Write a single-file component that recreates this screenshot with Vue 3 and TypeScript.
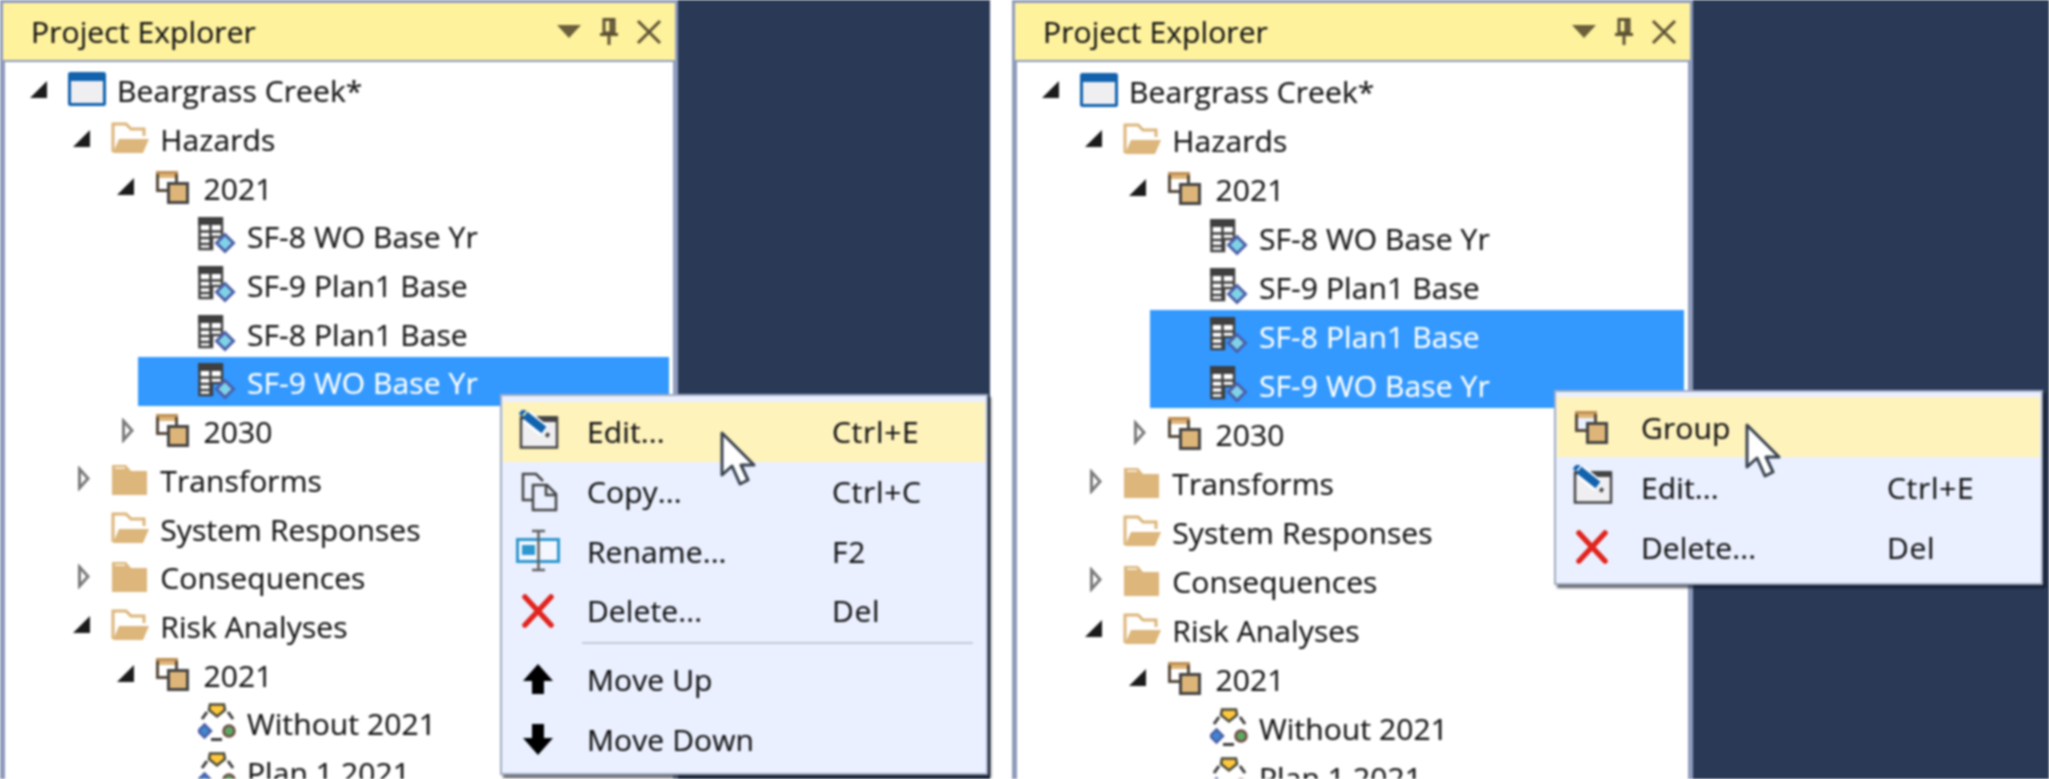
<script setup lang="ts">
type Arrow = 'open' | 'closed' | 'none'
interface TreeRow {
  label: string
  level: number
  arrow: Arrow
  icon: string
  selected?: boolean
}
interface MenuItem {
  label: string
  icon: string
  shortcut?: string
  hover?: boolean
  separatorAfter?: boolean
}
interface Pane {
  id: string
  rows: TreeRow[]
  menu: MenuItem[]
}

const base = (selected: string[]): TreeRow[] => {
  const rows: TreeRow[] = [
    { label: 'Beargrass Creek*', level: 0, arrow: 'open', icon: 'i-app' },
    { label: 'Hazards', level: 1, arrow: 'open', icon: 'i-folder-open' },
    { label: '2021', level: 2, arrow: 'open', icon: 'i-group' },
    { label: 'SF-8 WO Base Yr', level: 3, arrow: 'none', icon: 'i-table' },
    { label: 'SF-9 Plan1 Base', level: 3, arrow: 'none', icon: 'i-table' },
    { label: 'SF-8 Plan1 Base', level: 3, arrow: 'none', icon: 'i-table' },
    { label: 'SF-9 WO Base Yr', level: 3, arrow: 'none', icon: 'i-table' },
    { label: '2030', level: 2, arrow: 'closed', icon: 'i-group' },
    { label: 'Transforms', level: 1, arrow: 'closed', icon: 'i-folder' },
    { label: 'System Responses', level: 1, arrow: 'none', icon: 'i-folder-open' },
    { label: 'Consequences', level: 1, arrow: 'closed', icon: 'i-folder' },
    { label: 'Risk Analyses', level: 1, arrow: 'open', icon: 'i-folder-open' },
    { label: '2021', level: 2, arrow: 'open', icon: 'i-group' },
    { label: 'Without 2021', level: 3, arrow: 'none', icon: 'i-risk' },
    { label: 'Plan 1 2021', level: 3, arrow: 'none', icon: 'i-risk' },
  ]
  return rows.map((r) => ({ ...r, selected: selected.includes(r.label) }))
}

const panes: Pane[] = [
  {
    id: 'one',
    rows: base(['SF-9 WO Base Yr']),
    menu: [
      { label: 'Edit...', icon: 'i-edit', shortcut: 'Ctrl+E', hover: true },
      { label: 'Copy...', icon: 'i-copy', shortcut: 'Ctrl+C' },
      { label: 'Rename...', icon: 'i-rename', shortcut: 'F2' },
      { label: 'Delete...', icon: 'i-delete', shortcut: 'Del', separatorAfter: true },
      { label: 'Move Up', icon: 'i-up' },
      { label: 'Move Down', icon: 'i-down' },
    ],
  },
  {
    id: 'two',
    rows: base(['SF-8 Plan1 Base', 'SF-9 WO Base Yr']),
    menu: [
      { label: 'Group', icon: 'i-group-menu', hover: true },
      { label: 'Edit...', icon: 'i-edit', shortcut: 'Ctrl+E' },
      { label: 'Delete...', icon: 'i-delete', shortcut: 'Del' },
    ],
  },
]

const rowIndent = (level: number): string => `${3 + level * 43.3}px`
</script>

<template>
  <svg class="defs" aria-hidden="true">
    <symbol id="i-app" viewBox="0 0 38 38">
      <rect x="1.5" y="3.5" width="35" height="31" rx="1" fill="#efeff2" stroke="#1262ae" stroke-width="3" />
      <rect x="1" y="3" width="36" height="8" fill="#1262ae" />
    </symbol>
    <symbol id="i-folder-open" viewBox="0 0 38 38">
      <path d="M2 33V5H15L20 10H33V17" fill="none" stroke="#dcb67a" stroke-width="3" />
      <path d="M2 34L8 20H38L32 34Z" fill="#dcb67a" />
    </symbol>
    <symbol id="i-folder" viewBox="0 0 38 38">
      <path d="M1 35V5H15L20 11H36V35Z" fill="#dcb67a" />
      <path d="M4 8H14" stroke="#f3e6d0" stroke-width="2" />
    </symbol>
    <symbol id="i-group" viewBox="0 0 38 38">
      <rect x="2.5" y="4.5" width="19" height="18" fill="#fff" stroke="#55493a" stroke-width="3" />
      <path d="M1 4.5H23" stroke="#c08f52" stroke-width="3" />
      <rect x="4" y="6" width="16" height="4" fill="#deb578" />
      <rect x="13.5" y="15.5" width="19" height="19" fill="#deb578" stroke="#444" stroke-width="3" />
    </symbol>
    <symbol id="i-group-menu" viewBox="0 0 44 44">
      <rect x="6.5" y="7.5" width="19" height="18" fill="#eaf0ff" stroke="#55493a" stroke-width="3" />
      <path d="M5 7.5H27" stroke="#c08f52" stroke-width="3" />
      <rect x="8" y="9" width="16" height="4" fill="#deb578" />
      <rect x="17.5" y="18.5" width="19" height="19" fill="#deb578" stroke="#444" stroke-width="3" />
    </symbol>
    <symbol id="i-table" viewBox="0 -1 38 38">
      <path d="M1.5 1.5H24V20H14V32H1.5Z" fill="#fff" stroke="#3f3f3f" stroke-width="2.5" />
      <rect x="0" y="0" width="25" height="8" fill="#3f3f3f" />
      <path d="M1 14.5H24M1 21H14M1 27H14M12.5 8V32" stroke="#3f3f3f" stroke-width="2.5" fill="none" />
      <path d="M27 17.5L35.5 26L27 34.5L18.5 26Z" fill="#7fd3e8" stroke="#4c5fa8" stroke-width="3" />
    </symbol>
    <symbol id="i-risk" viewBox="0 0 38 38">
      <path d="M12 1.5H26L27 7L19 13.5L11 7Z" fill="#ffc83d" stroke="#4a4a3a" stroke-width="2.5" />
      <path d="M4 16L9 9M30 9L35 16M13 36.5H24" stroke="#3d3d3d" stroke-width="3" fill="none" />
      <path d="M6.5 21.5L13 28L6.5 34.5L0 28Z" fill="#3f88d0" stroke="#4c5fa8" stroke-width="2.5" />
      <circle cx="31" cy="28" r="5.5" fill="#5da862" stroke="#6f4a45" stroke-width="2.5" />
    </symbol>
    <symbol id="i-edit" viewBox="0 0 44 44">
      <rect x="5" y="7.5" width="36" height="30" fill="#efeff2" stroke="#444" stroke-width="2.5" />
      <rect x="5" y="6" width="36" height="6" fill="#444" />
      <path d="M10 6L28 21" stroke="#fff" stroke-width="13" />
      <path d="M9 5L28 20" stroke="#1262ae" stroke-width="8" />
      <path d="M5 1L8 3.5" stroke="#1262ae" stroke-width="7" />
      <path d="M30 24L33 26" stroke="#444" stroke-width="4" />
    </symbol>
    <symbol id="i-copy" viewBox="0 0 44 44">
      <path d="M16 30H7V4H20L27 11" fill="none" stroke="#444" stroke-width="2.5" />
      <path d="M17 15H31L40 24V40H17Z" fill="#eaf0ff" stroke="#444" stroke-width="2.5" />
      <path d="M30 15V25H40" fill="none" stroke="#444" stroke-width="2.5" />
    </symbol>
    <symbol id="i-rename" viewBox="0 0 44 44">
      <rect x="1.5" y="10.5" width="41" height="22" fill="#f4f7ff" stroke="#2e97cf" stroke-width="3" />
      <rect x="6" y="16" width="13" height="10" fill="#2e97cf" />
      <path d="M16 2H29M22.5 2V41M16 41H29" fill="none" stroke="#5f5f5f" stroke-width="2.5" />
    </symbol>
    <symbol id="i-delete" viewBox="0 0 44 44">
      <path d="M9 8L35 36M35 8L9 36" stroke="#e1241d" stroke-width="5.5" stroke-linecap="round" />
    </symbol>
    <symbol id="i-up" viewBox="0 0 44 44">
      <path d="M22 6L37 23H28V36H16V23H7Z" fill="#000" />
    </symbol>
    <symbol id="i-down" viewBox="0 0 44 44">
      <path d="M22 38L37 21H28V7H16V21H7Z" fill="#000" />
    </symbol>
  </svg>

  <div class="screen">
    <section v-for="pane in panes" :key="pane.id" class="window" :class="pane.id">
      <div class="panel">
        <header class="title">
          <span class="title-text">Project Explorer</span>
          <div class="title-tools">
            <svg width="24" height="13" viewBox="0 0 24 13"><path d="M0 0H24L12 13Z" fill="#6b5f3b" /></svg>
            <svg width="20" height="27" viewBox="0 0 20 27">
              <path d="M5 1.5H15V15H5Z" fill="none" stroke="#5d5334" stroke-width="3" />
              <path d="M1 16.5H19M10 16V27M12 3V15" stroke="#5d5334" stroke-width="3" fill="none" />
            </svg>
            <svg width="26" height="26" viewBox="0 0 26 26">
              <path d="M2 2L24 24M24 2L2 24" stroke="#5d5334" stroke-width="3" />
            </svg>
          </div>
        </header>
        <ul class="tree">
          <li
            v-for="(row, i) in pane.rows"
            :key="i"
            class="row"
            :class="{ selected: row.selected }"
            :style="{ marginLeft: rowIndent(row.level) }"
          >
            <span class="twisty">
              <svg v-if="row.arrow === 'open'" width="17" height="17" viewBox="0 0 17 17">
                <path d="M17 0V17H0Z" fill="#1b1b1b" />
              </svg>
              <svg v-else-if="row.arrow === 'closed'" width="17" height="25" viewBox="0 0 17 25">
                <path d="M6.5 3L15 12.5L6.5 22Z" fill="#fff" stroke="#7a7a7a" stroke-width="3" />
              </svg>
            </span>
            <svg class="node-icon"><use :href="'#' + row.icon" /></svg>
            <span class="label">{{ row.label }}</span>
          </li>
        </ul>
      </div>

      <div class="menu">
        <template v-for="item in pane.menu" :key="item.label">
          <div class="item" :class="{ hover: item.hover }">
            <svg class="menu-icon"><use :href="'#' + item.icon" /></svg>
            <span class="item-label">{{ item.label }}</span>
            <span v-if="item.shortcut" class="shortcut">{{ item.shortcut }}</span>
          </div>
          <div v-if="item.separatorAfter" class="separator"></div>
        </template>
      </div>

      <svg class="cursor" width="38" height="56" viewBox="0 0 38 56">
        <path
          d="M2 2V44L12 35L20 53L28 49L21 34H34Z"
          fill="#fff"
          stroke="#38424f"
          stroke-width="3"
          stroke-linejoin="round"
        />
      </svg>
    </section>
  </div>
</template>

<style scoped>
.defs {
  position: absolute;
  width: 0;
  height: 0;
}
.screen {
  display: flex;
  gap: 22px;
  height: 779px;
  overflow: hidden;
  background: #fff;
  font-family: "Open Sans", "Liberation Sans", sans-serif;
  font-size: 30px;
  letter-spacing: 0.1px;
  color: #141414;
  -webkit-text-stroke: 0.2px currentColor;
  filter: blur(0.8px);
}
.window {
  position: relative;
  display: flex;
  flex: none;
  height: 779px;
  background: #2a3a56;
}
.one {
  width: 990px;
}
.two {
  width: 1037px;
}
.panel {
  display: flex;
  flex-direction: column;
  flex: none;
  box-sizing: border-box;
  height: 779px;
  border: solid #8e9bbc;
  border-width: 3px 3px 0;
  background: #fff;
}
.one .panel {
  width: 678px;
}
.two .panel {
  width: 681px;
}
.title {
  display: flex;
  align-items: center;
  flex: none;
  box-sizing: border-box;
  height: 57px;
  padding: 0 13px 0 28px;
  background: #fff29d;
  color: #141414;
}
.title-tools {
  display: flex;
  align-items: center;
  gap: 17.5px;
  margin-left: auto;
}
.tree {
  flex: 1;
  min-height: 0;
  margin: 0;
  padding: 3px 0 0;
  overflow: hidden;
  list-style: none;
  border: solid #8e9bbc;
  border-width: 2px 2px 0;
}
.row {
  display: flex;
  align-items: center;
  margin-right: 4px;
  padding-left: 22px;
}
.one .row {
  height: 48.7px;
}
.two .row {
  height: 49px;
}
.row.selected {
  background: #3399ff;
  color: #fff;
}
.twisty {
  display: flex;
  flex: none;
  align-items: center;
  width: 17px;
  margin-right: 21px;
}
.node-icon {
  flex: none;
  width: 38px;
  height: 38px;
  margin-right: 11px;
}
.label {
  padding-top: 3px;
  white-space: nowrap;
}
.menu {
  position: absolute;
  display: flex;
  flex-direction: column;
  box-sizing: border-box;
  border: 2px solid #a1abc0;
  background: #eaf0ff;
  box-shadow: 3px 3px 2px rgba(10, 15, 25, 0.65);
}
.one .menu {
  left: 500px;
  top: 394px;
  width: 488px;
  height: 381px;
  padding: 6px 1px 3px;
}
.two .menu {
  left: 542px;
  top: 390px;
  width: 489px;
  height: 195px;
  padding: 5px 1px 6px;
}
.item {
  position: relative;
  display: flex;
  align-items: center;
  flex: none;
  height: 59.7px;
  padding-left: 13px;
  white-space: nowrap;
}
.two .item {
  height: 60px;
}
.item.hover {
  background: #fff3bc;
}
.menu-icon {
  flex: none;
  width: 44px;
  height: 44px;
  margin-right: 27px;
}
.shortcut {
  position: absolute;
  letter-spacing: 0.7px;
}
.one .shortcut {
  left: 329px;
}
.two .shortcut {
  left: 330px;
}
.separator {
  flex: none;
  height: 2px;
  margin: 1px 12px 6px 79px;
  background: #c4c9d6;
}
.cursor {
  position: absolute;
}
.one .cursor {
  left: 720px;
  top: 431px;
}
.two .cursor {
  left: 733px;
  top: 423px;
}
</style>

<style>
html,
body {
  margin: 0;
  overflow: hidden;
  background: #fff;
}
</style>
